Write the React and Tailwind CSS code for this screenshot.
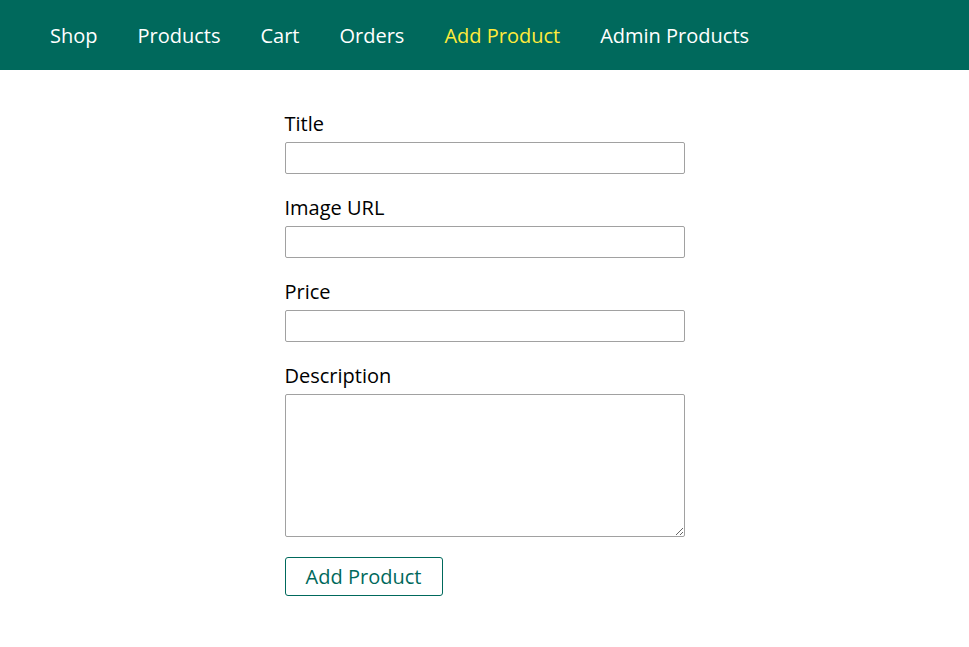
export default function App() {
  const items = ["Shop", "Products", "Cart", "Orders", "Add Product", "Admin Products"];
  return (
    <div className="min-h-screen bg-white font-['Open_Sans',sans-serif] text-[20px] leading-normal text-black">
      <header className="flex h-[70px] w-full items-center bg-[#00695c] px-[30px] pt-[2px]">
        <nav className="flex h-full items-center">
          <ul className="flex">
            {items.map((it) => (
              <li key={it} className="mx-[20px] leading-normal">
                <a
                  href="#"
                  className={
                    it === "Add Product"
                      ? "text-[#ffeb3b] no-underline"
                      : "text-white no-underline"
                  }
                >
                  {it}
                </a>
              </li>
            ))}
          </ul>
        </nav>
      </header>
      <main className="p-[20px]">
        <form className="mx-auto mt-[20px] flex w-[400px] flex-col gap-[20px]" onSubmit={(e) => e.preventDefault()}>
          <div className="flex flex-col gap-[5px]">
            <label className="block leading-[27px]">Title</label>
            <input type="text" className="block h-[32px] w-full rounded-[2px] border border-[#a1a1a1] px-[2px] py-[1px] outline-none" />
          </div>
          <div className="flex flex-col gap-[5px]">
            <label className="block leading-[27px]">Image URL</label>
            <input type="text" className="block h-[32px] w-full rounded-[2px] border border-[#a1a1a1] px-[2px] py-[1px] outline-none" />
          </div>
          <div className="flex flex-col gap-[5px]">
            <label className="block leading-[27px]">Price</label>
            <input type="number" className="block h-[32px] w-full rounded-[2px] border border-[#a1a1a1] px-[2px] py-[1px] outline-none" />
          </div>
          <div className="flex flex-col gap-[5px]">
            <label className="block leading-[27px]">Description</label>
            <textarea rows={5} className="block h-[143px] w-full resize rounded-[2px] border border-[#a1a1a1] px-[2px] py-[2px] leading-[27px] outline-none" />
          </div>
          <div>
            <button type="submit" className="h-[39px] w-[158px] cursor-pointer rounded-[3px] border border-[#00695c] bg-white text-[20px] leading-[27px] text-[#00695c]">
              Add Product
            </button>
          </div>
        </form>
      </main>
    </div>
  );
}
